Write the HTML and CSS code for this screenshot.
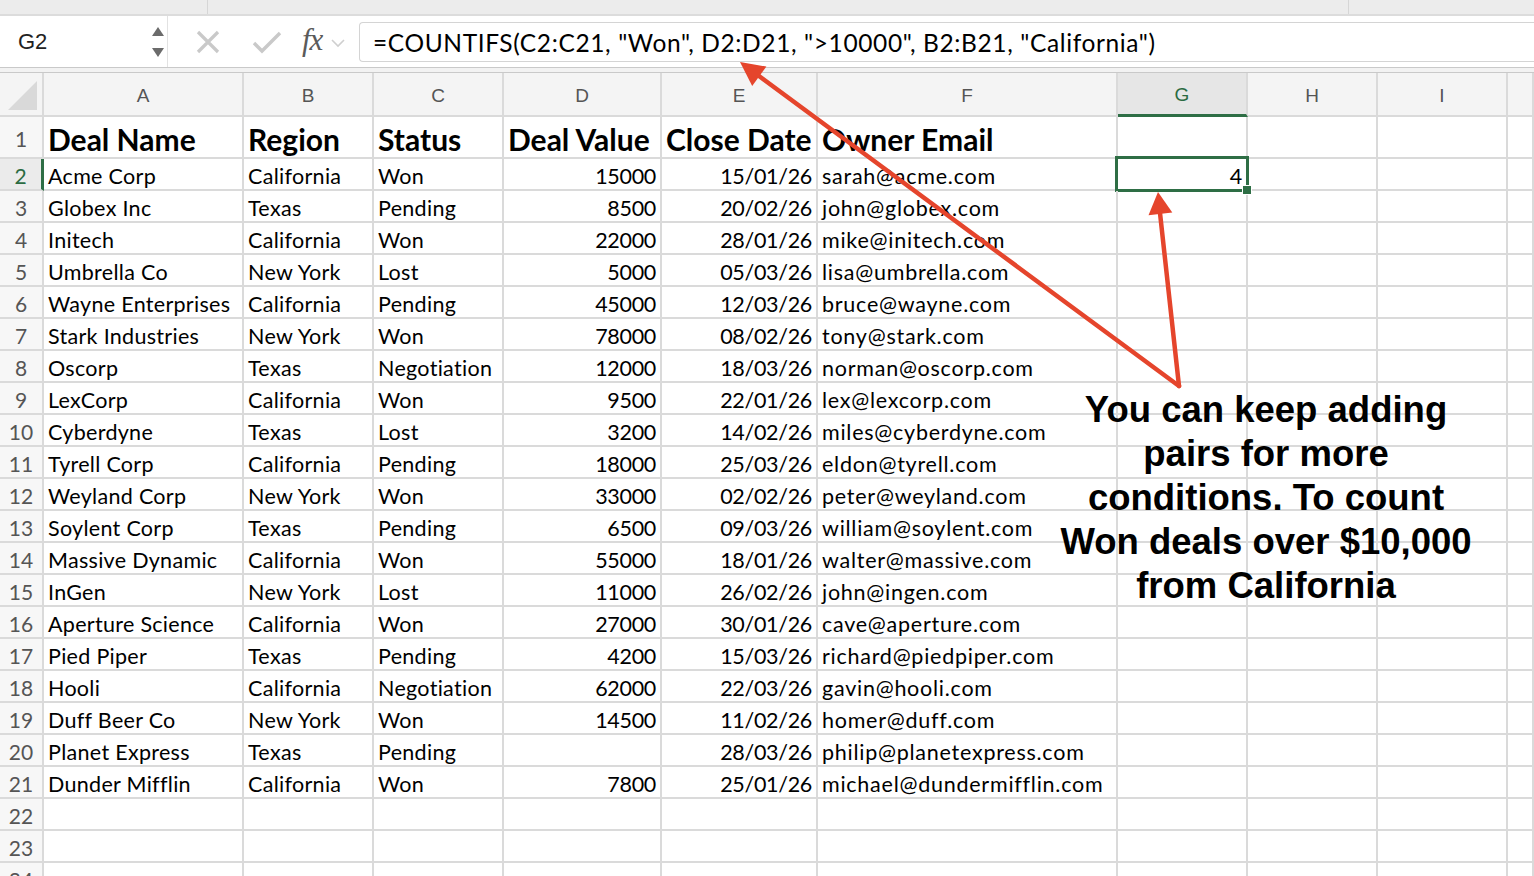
FILE: index.html
```html
<!DOCTYPE html>
<html>
<head>
<meta charset="utf-8">
<link rel="stylesheet" href="styles.css">
</head>
<body>
<div class="app">
  <div class="topbar"><div class="seg seg1"></div><div class="seg seg2"></div><div class="seg"></div></div>
  <div class="fbar">
    <div class="namebox">
      <span>G2</span>
      <svg class="spin" width="14" height="34" viewBox="0 0 14 34"><path d="M7 2 L13 11 L1 11 Z" fill="#6b6b6b"/><path d="M1 23 L13 23 L7 32 Z" fill="#6b6b6b"/></svg>
    </div>
    <div class="ficons">
      <svg class="ic-x" width="24" height="24" viewBox="0 0 24 24"><path d="M2 2 L22 22 M22 2 L2 22" stroke="#c9c9c9" stroke-width="3.2" fill="none"/></svg>
      <svg class="ic-ok" width="30" height="24" viewBox="0 0 30 24"><path d="M2 13 L10 21 L28 3" stroke="#c9c9c9" stroke-width="3.4" fill="none"/></svg>
      <span class="fx">fx</span>
      <svg class="ic-chev" width="14" height="10" viewBox="0 0 14 10"><path d="M1 2 L7 8 L13 2" stroke="#cfcfcf" stroke-width="1.6" fill="none"/></svg>
    </div>
    <div class="finput">=COUNTIFS(C2:C21, "Won", D2:D21, "&gt;10000", B2:B21, "California")</div>
  </div>
  <div class="dbl"></div>

  <div class="sheet">
    <div class="corner"><svg width="42" height="42" viewBox="0 0 42 42"><path d="M8 37 L37 8 L37 37 Z" fill="#d9d9d9"/></svg></div>
    <div class="ch">A</div><div class="ch">B</div><div class="ch">C</div><div class="ch">D</div><div class="ch">E</div><div class="ch">F</div><div class="ch ch-sel">G</div><div class="ch">H</div><div class="ch">I</div><div class="ch"></div>

    <div class="rh">1</div><div class="c b">Deal Name</div><div class="c b">Region</div><div class="c b">Status</div><div class="c b">Deal Value</div><div class="c b">Close Date</div><div class="c b">Owner Email</div><div class="c"></div><div class="c"></div><div class="c"></div><div class="c"></div>

    <div class="rh rh-sel">2</div><div class="c">Acme Corp</div><div class="c">California</div><div class="c">Won</div><div class="c n">15000</div><div class="c n">15/01/26</div><div class="c e">sarah@acme.com</div><div class="c n sel">4</div><div class="c"></div><div class="c"></div><div class="c"></div>

    <div class="rh">3</div><div class="c">Globex Inc</div><div class="c">Texas</div><div class="c">Pending</div><div class="c n">8500</div><div class="c n">20/02/26</div><div class="c e">john@globex.com</div><div class="c"></div><div class="c"></div><div class="c"></div><div class="c"></div>

    <div class="rh">4</div><div class="c">Initech</div><div class="c">California</div><div class="c">Won</div><div class="c n">22000</div><div class="c n">28/01/26</div><div class="c e">mike@initech.com</div><div class="c"></div><div class="c"></div><div class="c"></div><div class="c"></div>

    <div class="rh">5</div><div class="c">Umbrella Co</div><div class="c">New York</div><div class="c">Lost</div><div class="c n">5000</div><div class="c n">05/03/26</div><div class="c e">lisa@umbrella.com</div><div class="c"></div><div class="c"></div><div class="c"></div><div class="c"></div>

    <div class="rh">6</div><div class="c">Wayne Enterprises</div><div class="c">California</div><div class="c">Pending</div><div class="c n">45000</div><div class="c n">12/03/26</div><div class="c e">bruce@wayne.com</div><div class="c"></div><div class="c"></div><div class="c"></div><div class="c"></div>

    <div class="rh">7</div><div class="c">Stark Industries</div><div class="c">New York</div><div class="c">Won</div><div class="c n">78000</div><div class="c n">08/02/26</div><div class="c e">tony@stark.com</div><div class="c"></div><div class="c"></div><div class="c"></div><div class="c"></div>

    <div class="rh">8</div><div class="c">Oscorp</div><div class="c">Texas</div><div class="c">Negotiation</div><div class="c n">12000</div><div class="c n">18/03/26</div><div class="c e">norman@oscorp.com</div><div class="c"></div><div class="c"></div><div class="c"></div><div class="c"></div>

    <div class="rh">9</div><div class="c">LexCorp</div><div class="c">California</div><div class="c">Won</div><div class="c n">9500</div><div class="c n">22/01/26</div><div class="c e">lex@lexcorp.com</div><div class="c"></div><div class="c"></div><div class="c"></div><div class="c"></div>

    <div class="rh">10</div><div class="c">Cyberdyne</div><div class="c">Texas</div><div class="c">Lost</div><div class="c n">3200</div><div class="c n">14/02/26</div><div class="c e">miles@cyberdyne.com</div><div class="c"></div><div class="c"></div><div class="c"></div><div class="c"></div>

    <div class="rh">11</div><div class="c">Tyrell Corp</div><div class="c">California</div><div class="c">Pending</div><div class="c n">18000</div><div class="c n">25/03/26</div><div class="c e">eldon@tyrell.com</div><div class="c"></div><div class="c"></div><div class="c"></div><div class="c"></div>

    <div class="rh">12</div><div class="c">Weyland Corp</div><div class="c">New York</div><div class="c">Won</div><div class="c n">33000</div><div class="c n">02/02/26</div><div class="c e">peter@weyland.com</div><div class="c"></div><div class="c"></div><div class="c"></div><div class="c"></div>

    <div class="rh">13</div><div class="c">Soylent Corp</div><div class="c">Texas</div><div class="c">Pending</div><div class="c n">6500</div><div class="c n">09/03/26</div><div class="c e">william@soylent.com</div><div class="c"></div><div class="c"></div><div class="c"></div><div class="c"></div>

    <div class="rh">14</div><div class="c">Massive Dynamic</div><div class="c">California</div><div class="c">Won</div><div class="c n">55000</div><div class="c n">18/01/26</div><div class="c e">walter@massive.com</div><div class="c"></div><div class="c"></div><div class="c"></div><div class="c"></div>

    <div class="rh">15</div><div class="c">InGen</div><div class="c">New York</div><div class="c">Lost</div><div class="c n">11000</div><div class="c n">26/02/26</div><div class="c e">john@ingen.com</div><div class="c"></div><div class="c"></div><div class="c"></div><div class="c"></div>

    <div class="rh">16</div><div class="c">Aperture Science</div><div class="c">California</div><div class="c">Won</div><div class="c n">27000</div><div class="c n">30/01/26</div><div class="c e">cave@aperture.com</div><div class="c"></div><div class="c"></div><div class="c"></div><div class="c"></div>

    <div class="rh">17</div><div class="c">Pied Piper</div><div class="c">Texas</div><div class="c">Pending</div><div class="c n">4200</div><div class="c n">15/03/26</div><div class="c e">richard@piedpiper.com</div><div class="c"></div><div class="c"></div><div class="c"></div><div class="c"></div>

    <div class="rh">18</div><div class="c">Hooli</div><div class="c">California</div><div class="c">Negotiation</div><div class="c n">62000</div><div class="c n">22/03/26</div><div class="c e">gavin@hooli.com</div><div class="c"></div><div class="c"></div><div class="c"></div><div class="c"></div>

    <div class="rh">19</div><div class="c">Duff Beer Co</div><div class="c">New York</div><div class="c">Won</div><div class="c n">14500</div><div class="c n">11/02/26</div><div class="c e">homer@duff.com</div><div class="c"></div><div class="c"></div><div class="c"></div><div class="c"></div>

    <div class="rh">20</div><div class="c">Planet Express</div><div class="c">Texas</div><div class="c">Pending</div><div class="c n"></div><div class="c n">28/03/26</div><div class="c e">philip@planetexpress.com</div><div class="c"></div><div class="c"></div><div class="c"></div><div class="c"></div>

    <div class="rh">21</div><div class="c">Dunder Mifflin</div><div class="c">California</div><div class="c">Won</div><div class="c n">7800</div><div class="c n">25/01/26</div><div class="c e">michael@dundermifflin.com</div><div class="c"></div><div class="c"></div><div class="c"></div><div class="c"></div>

    <div class="rh">22</div><div class="c"></div><div class="c"></div><div class="c"></div><div class="c"></div><div class="c"></div><div class="c"></div><div class="c"></div><div class="c"></div><div class="c"></div><div class="c"></div>

    <div class="rh">23</div><div class="c"></div><div class="c"></div><div class="c"></div><div class="c"></div><div class="c"></div><div class="c"></div><div class="c"></div><div class="c"></div><div class="c"></div><div class="c"></div>

    <div class="rh">24</div><div class="c"></div><div class="c"></div><div class="c"></div><div class="c"></div><div class="c"></div><div class="c"></div><div class="c"></div><div class="c"></div><div class="c"></div><div class="c"></div>
  </div>

  <svg class="arrows" width="1534" height="876" viewBox="0 0 1534 876">
    <g stroke="#e5452c" stroke-width="4.5" fill="none" stroke-linecap="round">
      <path d="M1179 386 L759 76"/>
      <path d="M1179 386 L1160 213"/>
    </g>
    <g fill="#e5452c">
      <path d="M740 62 L766.4 66.6 L752.2 85.9 Z"/>
      <path d="M1158 192 L1172.3 212.6 L1148.5 215.2 Z"/>
    </g>
  </svg>
  <div class="note">You can keep adding<br>pairs for more<br>conditions. To count<br>Won deals over $10,000<br>from California</div>
</div>
</body>
</html>
```

FILE: styles.css
```css
html, body {
  margin: 0;
  padding: 0;
  background: #ffffff;
}
body {
  width: 1534px;
  height: 876px;
  overflow: hidden;
}
.app {
  position: relative;
  width: 1534px;
  height: 876px;
  overflow: hidden;
  font-family: "Lato", "Open Sans", sans-serif;
  color: #000;
}
.topbar {
  height: 14px;
  background: #ececec;
  border-bottom: 2px solid #dcdcdc;
  display: flex;
}
.seg { height: 14px; }
.seg1 { width: 207px; border-right: 1px solid #d6d6d6; }
.seg2 { width: 1140px; border-right: 1px solid #d6d6d6; }

.fbar {
  height: 51px;
  display: flex;
  align-items: center;
  background: #fff;
}
.namebox {
  width: 168px;
  height: 51px;
  box-sizing: border-box;
  border-right: 1px solid #e2e2e2;
  display: flex;
  align-items: center;
  justify-content: space-between;
  padding-left: 18px;
  padding-right: 2px;
  font-family: "Liberation Sans", Arial, sans-serif;
  font-size: 22px;
  color: #222;
}
.spin { margin-top: 1px; }
.ficons {
  width: 191px;
  height: 51px;
  display: flex;
  align-items: center;
}
.ic-x { margin-left: 28px; }
.ic-ok { margin-left: 32px; }
.fx {
  margin-left: 20px;
  font-family: "Liberation Serif", "DejaVu Serif", serif;
  font-style: italic;
  font-size: 31px;
  color: #5a5a5a;
  letter-spacing: -1px;
  line-height: 1;
  margin-top: -4px;
}
.ic-chev { margin-left: 9px; margin-top: 2px; }
.finput {
  flex: 1;
  height: 40px;
  box-sizing: border-box;
  border: 1px solid #d4d4d4;
  border-right: none;
  border-radius: 4px 0 0 4px;
  display: flex;
  align-items: center;
  padding-left: 13px;
  font-size: 24.5px;
  letter-spacing: 0.62px;
  white-space: nowrap;
  margin-top: 1px;
}
.dbl {
  height: 4px;
  border-top: 1px solid #c9c9c9;
  border-bottom: 1px solid #c9c9c9;
  background: #f2f2f2;
}

.sheet {
  display: grid;
  grid-template-columns: 44px 200px 130px 130px 158px 156px 300px 130px 130px 130px 26px;
  grid-template-rows: 44px 42px;
  grid-auto-rows: 32px;
}
.sheet > div {
  box-sizing: border-box;
  border-right: 2px solid #dadada;
  border-bottom: 2px solid #dadada;
  overflow: visible;
  white-space: nowrap;
}
.corner {
  background: #f4f4f4;
}
.corner svg { display: block; }
.ch {
  background: #f4f4f4;
  display: flex;
  align-items: center;
  justify-content: center;
  font-family: "Liberation Sans", Arial, sans-serif;
  font-size: 19px;
  color: #555;
  padding-top: 3px;
}
.sheet > .ch-sel {
  background: #e6e6e6;
  color: #2b6b42;
  border-bottom: 3px solid #2e6e45;
}
.rh {
  background: #f7f7f7;
  display: flex;
  align-items: center;
  justify-content: center;
  font-size: 21px;
  color: #555;
  padding-top: 2px;
}
.sheet > .rh-sel {
  background: #ebebeb;
  color: #2b6b42;
  border-right: 3px solid #2e6e45;
}
.c {
  display: flex;
  align-items: center;
  padding: 3px 4px 0 4px;
  font-size: 21.5px;
  letter-spacing: 0.3px;
  position: relative;
}
.c.b {
  font-weight: 700;
  font-size: 30px;
  letter-spacing: 0;
  padding-top: 4px;
}
.c.n {
  justify-content: flex-end;
  letter-spacing: -0.3px;
}
.c.e {
  letter-spacing: 0.75px;
}
.c.sel::after {
  content: "";
  position: absolute;
  left: -3px;
  top: -3px;
  right: -3px;
  bottom: -3px;
  border: 3px solid #2e6e45;
}
.c.sel::before {
  content: "";
  position: absolute;
  right: -6px;
  bottom: -6px;
  width: 8px;
  height: 8px;
  background: #2e6e45;
  border: 1px solid #fff;
  z-index: 2;
}
.arrows {
  position: absolute;
  left: 0;
  top: 0;
  z-index: 5;
  pointer-events: none;
}
.note {
  position: absolute;
  left: 1036px;
  top: 388px;
  width: 460px;
  text-align: center;
  font-family: "Liberation Sans", Arial, sans-serif;
  font-weight: 700;
  font-size: 36.5px;
  line-height: 44px;
  color: #000;
  z-index: 6;
}
```
